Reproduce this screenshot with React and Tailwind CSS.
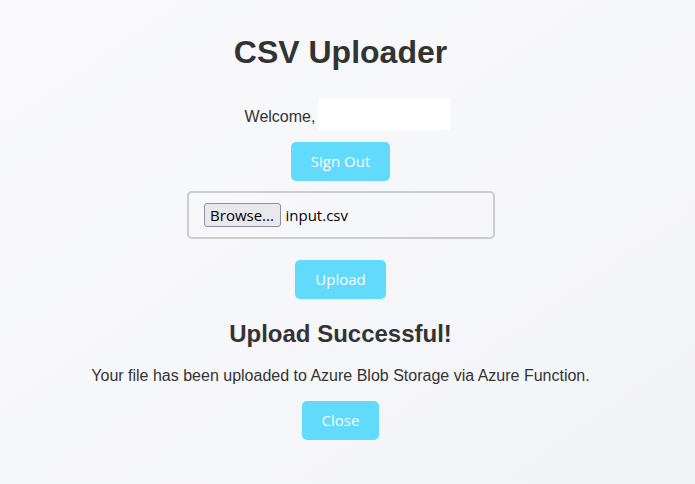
export default function App() {
  return (
    <div className="min-h-[484px] w-full bg-gradient-to-br from-[#fafafc] to-[#f3f4f8] font-['Liberation_Sans',Arial,sans-serif] text-[#333]">
      <div className="w-[681px] flex flex-col items-center pt-9">
        <h1 className="text-[32px] leading-8 font-bold">CSV Uploader</h1>

        {/* Welcome */}
        <div className="mt-[30px] ml-[14px] flex items-start h-8">
          <span className="mt-[10px] text-base leading-[18px]">Welcome,</span>
          <div className="ml-[3px] w-[132px] h-8 bg-white rounded-[3px]" />
        </div>

        <button className="mt-3 h-[39px] px-5 rounded-[5px] bg-[#61dafb] text-white text-[15px] font-['Open_Sans',sans-serif]">
          Sign Out
        </button>

        {/* File picker */}
        <div className="mt-[10px] w-[308px] h-12 border-2 border-[#ccc] rounded-[5px] flex items-center px-[15px]">
          <span className="w-[77px] h-6 flex items-center justify-center bg-[#e9e9ed] border border-[#8f8f9d] rounded-[3px] text-black text-[15px] font-['Open_Sans',sans-serif]">
            Browse...
          </span>
          <span className="ml-[5px] text-black text-[15px] font-['Open_Sans',sans-serif]">input.csv</span>
        </div>

        <button className="mt-[21px] h-[39px] px-5 rounded-[5px] bg-[#61dafb] text-white text-[15px] font-['Open_Sans',sans-serif]">
          Upload
        </button>

        <h2 className="mt-[21px] text-2xl leading-7 font-bold">Upload Successful!</h2>
        <p className="mt-[19px] text-base leading-[18px]">
          Your file has been uploaded to Azure Blob Storage via Azure Function.
        </p>

        <button className="mt-4 h-[39px] px-5 rounded-[5px] bg-[#61dafb] text-white text-[15px] font-['Open_Sans',sans-serif]">
          Close
        </button>
      </div>
    </div>
  );
}
